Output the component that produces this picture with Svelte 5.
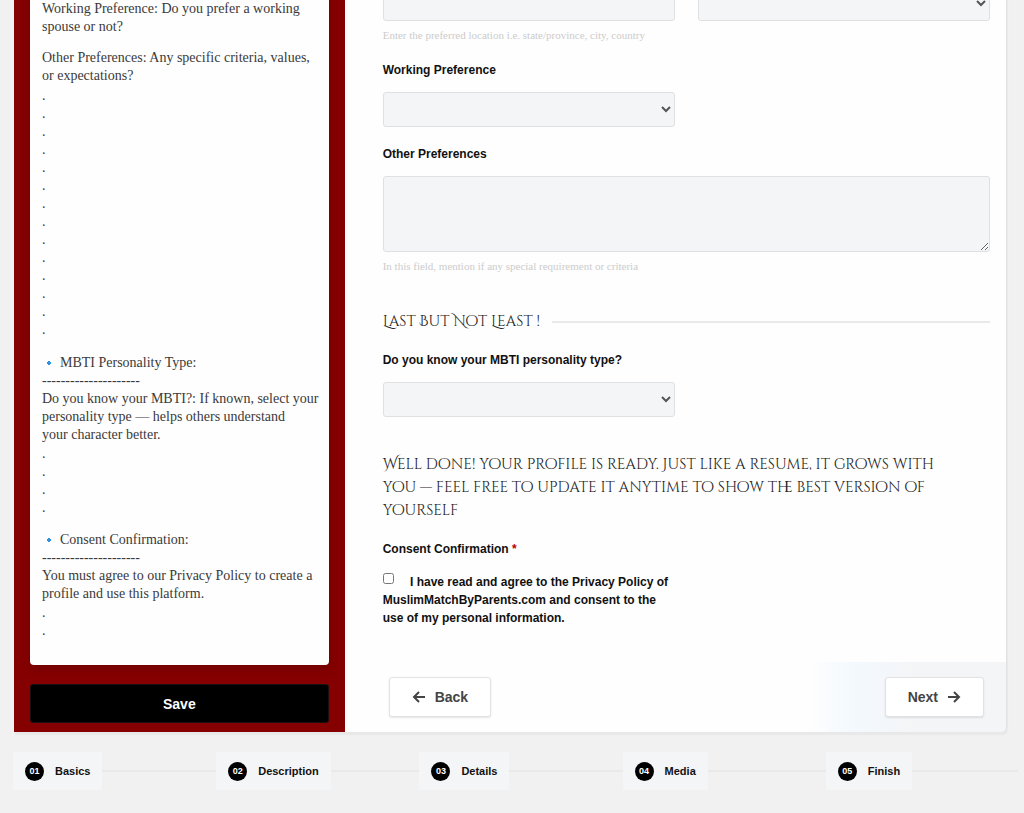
<script>
  const steps = ['Basics', 'Description', 'Details', 'Media', 'Finish'];
  const rule = '-'.repeat(21);
</script>

{#snippet dots(n)}
  <div class="dots">
    {#each Array(n) as _}<div>.</div>{/each}
  </div>
{/snippet}

{#snippet diamond()}
  <svg class="diamond" viewBox="0 0 18 18" aria-hidden="true">
    <path d="M7 7 9 9 7 11 5 9Z" fill="#2f92de" stroke="#2f92de" stroke-width="1" stroke-linejoin="round" />
  </svg>
{/snippet}

<div class="page">
  <div class="shell">
    <aside>
      <div class="guide">
        <p>Working Preference: Do you prefer a working<br />spouse or not?</p>
        <p>Other Preferences: Any specific criteria, values,<br />or expectations?</p>
        {@render dots(14)}
        <div class="topic">
          <h4>{@render diamond()}MBTI Personality Type:</h4>
          <div>{rule}</div>
          <div>Do you know your MBTI?: If known, select your personality type — helps others understand<br />your character better.</div>
          {@render dots(4)}
        </div>
        <div class="topic">
          <h4>{@render diamond()}Consent Confirmation:</h4>
          <div>{rule}</div>
          <div>You must agree to our Privacy Policy to create a profile and use this platform.</div>
          {@render dots(2)}
        </div>
      </div>
      <button class="save" type="button">Save</button>
    </aside>

    <form>
      <div class="fields">
        <div class="cols">
          <div>
            <input class="control" type="text" aria-label="Preferred location" />
            <small>Enter the preferred location i.e. state/province, city, country</small>
          </div>
          <div><select class="control" aria-label="Preference"><option></option></select></div>
        </div>

        <div class="cols">
          <div>
            <label class="title" for="working">Working Preference</label>
            <select class="control" id="working"><option></option></select>
          </div>
        </div>

        <div class="wide">
          <label class="title" for="other">Other Preferences</label>
          <textarea class="control" id="other"></textarea>
          <small>In this field, mention if any special requirement or criteria</small>
        </div>

        <h3>Last But Not Least !</h3>

        <div class="cols">
          <div>
            <label class="title" for="mbti">Do you know your MBTI personality type?</label>
            <select class="control" id="mbti"><option></option></select>
          </div>
        </div>

        <p class="done">Well done! your profile is ready. Just like a resume, it grows with you — feel free to update it anytime to show the best version of yourself</p>

        <div class="cols">
          <div>
            <div class="title consent">Consent Confirmation <span>*</span></div>
            <div class="agree">
              <input type="checkbox" id="agree" />
              <label for="agree">I have read and agree to the Privacy Policy of MuslimMatchByParents.com and consent to the use of my personal information.</label>
            </div>
          </div>
        </div>
      </div>

      <div class="actions">
        <button type="button">
          <svg viewBox="0 0 14 14" aria-hidden="true"><path d="M13 7H2M7 2 2 7l5 5" /></svg>
          Back
        </button>
        <button type="button">
          Next
          <svg viewBox="0 0 14 14" aria-hidden="true"><path d="M1 7h11M7 2l5 5-5 5" /></svg>
        </button>
      </div>
    </form>
  </div>

  <nav>
    {#each steps as step, i}
      <div class="cell"><a href="#{step}"><b>0{i + 1}</b>{step}</a></div>
    {/each}
  </nav>
</div>

<style>
  :global(body) {
    background: #f1f1f1;
    overflow: hidden;
  }
  * {
    box-sizing: border-box;
  }
  .page {
    margin-top: -14px;
    font-family: "Liberation Sans", Arial, sans-serif;
    color: #111;
  }
  .shell {
    display: flex;
    margin: 0 17px 0 14px;
    border-radius: 0 0 6px 0;
    background: #fefefe;
    border-right: 1px solid #e2e2e2;
    box-shadow: 1px 3px 1px #e8e8e8;
  }
  aside {
    flex: none;
    width: calc(100% / 3);
    display: flex;
    flex-direction: column;
    padding: 0 16px 9px;
    background: #850000;
  }
  .guide {
    flex: 1;
    padding: 14px 8px 22px 12px;
    background: #fefefe;
    border-radius: 0 0 4px 4px;
    box-shadow: 0 4px 8px rgba(0, 0, 0, 0.15);
    color: #3a3a3a;
    font-family: "Roboto Slab", "Liberation Serif", serif;
    font-size: 14px;
    line-height: 18px;
  }
  .guide p {
    margin: 0;
  }
  .guide p + p,
  .topic {
    margin-top: 13px;
  }
  .dots {
    padding: 2px 0;
  }
  .topic .dots {
    padding: 1px 0;
  }
  h4 {
    display: flex;
    margin: 0;
    font: inherit;
  }
  .diamond {
    width: 18px;
    height: 18px;
  }
  .save {
    height: 39px;
    margin-top: 19px;
    border: 1px solid #1a1010;
    border-radius: 3px;
    background: #000;
    color: #fff;
    font: bold 14px "Liberation Sans", Arial, sans-serif;
  }
  form {
    flex: 1;
    min-width: 0;
    display: flex;
    flex-direction: column;
  }
  .fields {
    flex: 1;
    padding: 0 16px 35px 38px;
  }
  .cols {
    display: grid;
    grid-template-columns: 1fr 1fr;
    gap: 23px;
  }
  .control {
    display: block;
    width: 100%;
    height: 35px;
    margin: 0;
    border: 1px solid #dfe0e2;
    border-radius: 3px;
    background: #f4f5f7;
    color: #555;
  }
  textarea.control {
    height: 76px;
  }
  small {
    display: block;
    margin-top: 7px;
    color: #ccc;
    font: 11px/15px "Roboto Slab", "Liberation Serif", serif;
  }
  .title {
    display: block;
    font-size: 12px;
    font-weight: bold;
    line-height: 18px;
    margin: 18px 0 13px;
  }
  h3,
  .done {
    margin: 36px 0 0;
    color: #222;
    font: 15px/23px "Cinzel Decorative", "Liberation Serif", serif;
  }
  .done {
    padding-right: 36px;
  }
  h3 {
    display: flex;
    align-items: center;
    gap: 12px;
  }
  h3::after {
    content: "";
    flex: 1;
    height: 2px;
    background: #e9e9e9;
  }
  .title.consent {
    margin-bottom: 15px;
  }
  .consent span {
    color: #b00;
  }
  .agree {
    font-size: 12px;
    font-weight: bold;
    line-height: 18px;
  }
  .agree input {
    width: 11px;
    height: 11px;
    margin: 0 13px 0 0;
    vertical-align: 2px;
  }
  .actions {
    display: flex;
    justify-content: space-between;
    padding: 15px 22px 15px 44px;
    border-radius: 0 0 6px 0;
    background: linear-gradient(90deg, #fefefe 70%, #f3f9fe 77%, #f4f5f7 86%);
  }
  .actions button {
    display: flex;
    align-items: center;
    gap: 9px;
    height: 40px;
    padding: 0 22px;
    border: 1px solid #e2e2e2;
    border-radius: 3px;
    background: #fff;
    box-shadow: 0 1px 2px rgba(0, 0, 0, 0.1);
    color: #444;
    font: bold 14px "Liberation Sans", Arial, sans-serif;
  }
  .actions svg {
    width: 14px;
    height: 14px;
    fill: none;
    stroke: currentColor;
    stroke-width: 2;
  }
  nav {
    display: grid;
    grid-template-columns: repeat(5, 1fr);
    gap: 11px;
    margin: 20px 6px 22px 13px;
    background: linear-gradient(#e9e9e9, #e9e9e9) center / 100% 2px no-repeat;
  }
  nav a {
    display: inline-flex;
    align-items: center;
    gap: 11px;
    height: 38px;
    padding: 0 12px;
    background: #f4f5f7;
    color: #111;
    font-size: 11px;
    font-weight: bold;
    text-decoration: none;
    vertical-align: top;
  }
  nav b {
    width: 19px;
    border-radius: 50%;
    background: #000;
    color: #fff;
    font-size: 9px;
    line-height: 19px;
    text-align: center;
  }
</style>
